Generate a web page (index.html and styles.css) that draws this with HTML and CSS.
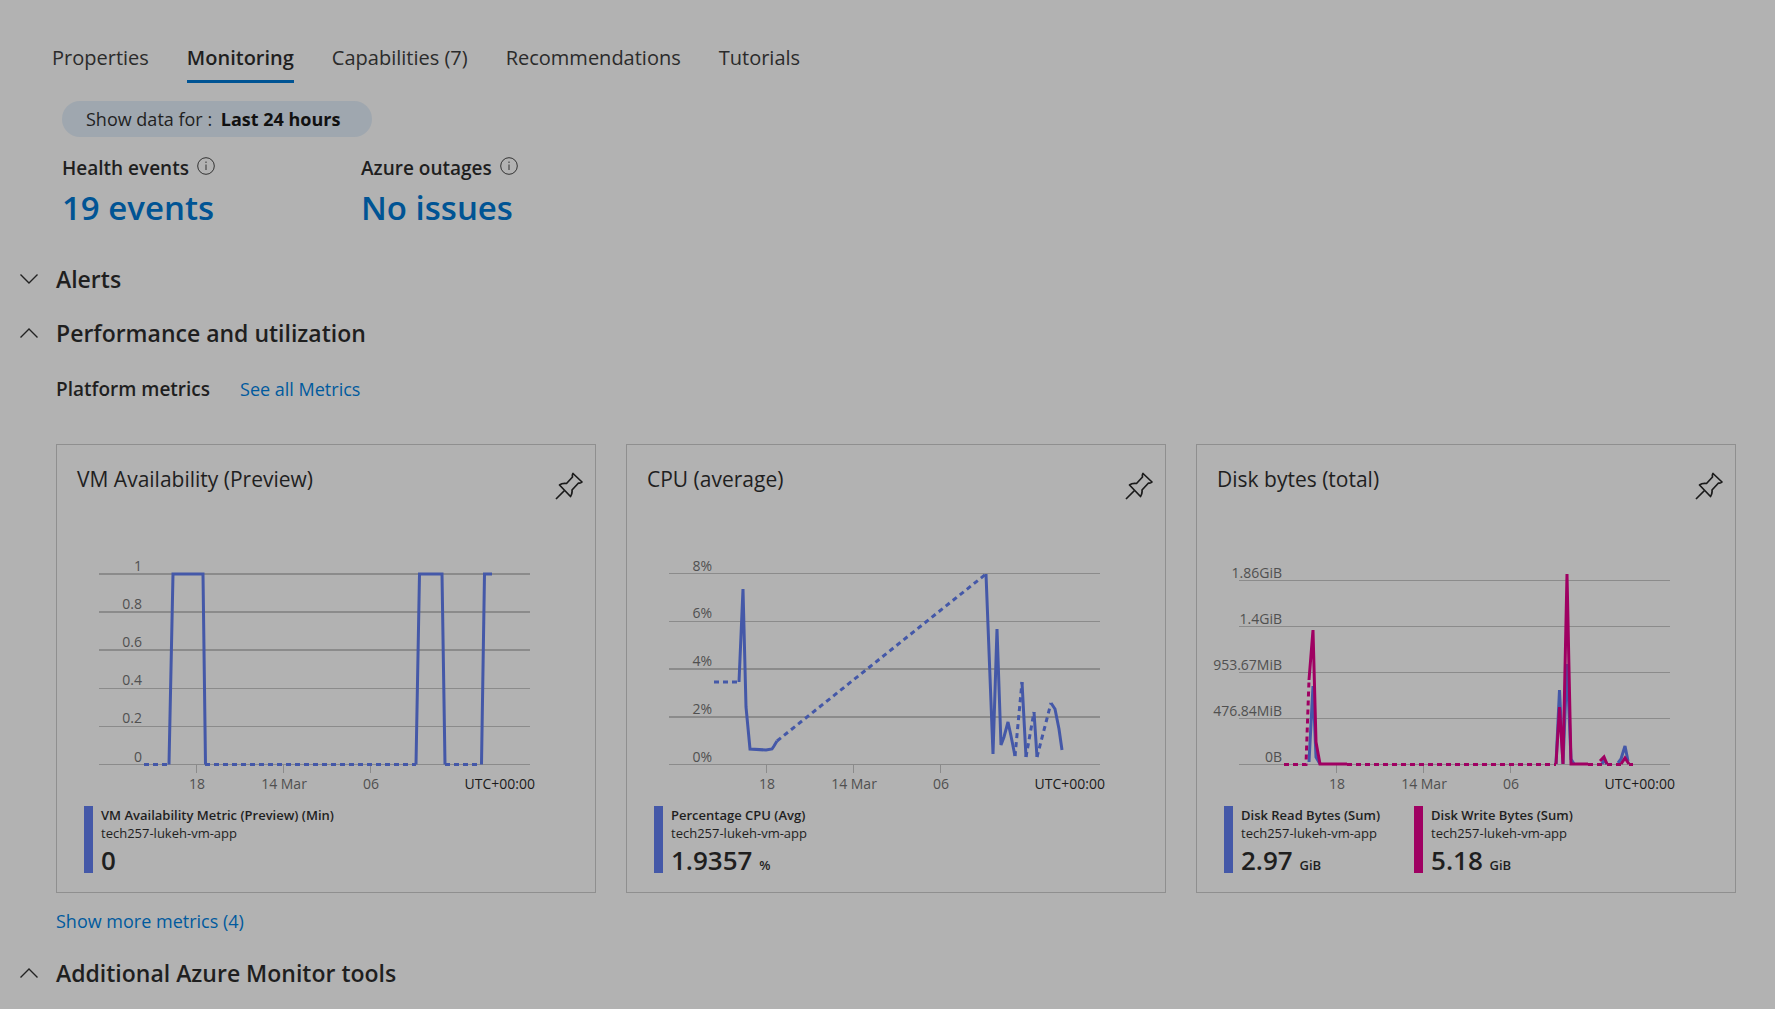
FILE: index.html
```html
<!DOCTYPE html>
<html lang="en">
<head>
<meta charset="utf-8">
<meta name="viewport" content="width=device-width, initial-scale=1">
<title>Monitoring</title>
<link rel="stylesheet" href="styles.css">
</head>
<body>
<svg class="sprite" aria-hidden="true">
  <symbol id="pin" viewBox="0 0 28 28"><path d="M1 27 10 18M18 1.500 27 10 Q25.500 11.500 23.500 11 L17 18 Q17.500 21.500 15.500 24.500 L4.500 13 Q7 11 11.500 11.500 L17.500 5 Q17 3 18 1.500Z"/></symbol>
  <symbol id="info" viewBox="0 0 18 18"><circle cx="9" cy="9" r="8.300"/><path d="M9 7.500V13M9 4.500V6"/></symbol>
  <symbol id="down" viewBox="0 0 18 10"><path d="M.5 .5 9 9 17.500 .5"/></symbol>
  <symbol id="up" viewBox="0 0 18 10"><path d="M.5 9.500 9 1 17.500 9.500"/></symbol>
</svg>

<nav class="tabs" role="tablist">
  <button class="tab" role="tab">Properties</button>
  <button class="tab tab-active" role="tab" aria-selected="true">Monitoring</button>
  <button class="tab" role="tab">Capabilities (7)</button>
  <button class="tab" role="tab">Recommendations</button>
  <button class="tab" role="tab">Tutorials</button>
</nav>

<main>
  <div class="overview">
    <button class="pill">Show data for : <strong>Last 24 hours</strong></button>
    <div class="stats">
      <div class="stat">
        <div class="stat-label">Health events <svg class="info"><use href="#info"/></svg></div>
        <a class="stat-value" href="#">19 events</a>
      </div>
      <div class="stat">
        <div class="stat-label">Azure outages <svg class="info"><use href="#info"/></svg></div>
        <a class="stat-value" href="#">No issues</a>
      </div>
    </div>
  </div>

  <button class="section" aria-expanded="false"><svg class="chevron"><use href="#down"/></svg>Alerts</button>
  <button class="section" aria-expanded="true"><svg class="chevron"><use href="#up"/></svg>Performance and utilization</button>

  <div class="panel">
    <div class="platform"><h3>Platform metrics</h3><a class="link" href="#">See all Metrics</a></div>

    <div class="cards">
      <article class="card">
        <header class="card-head"><h4>VM Availability (Preview)</h4><button class="pin" aria-label="Pin to dashboard"><svg><use href="#pin"/></svg></button></header>
        <svg class="chart" viewBox="1 80 538 272">
          <path class="grid grid-strong" d="M43 131H474M43 169H474M43 207H474"/>
          <path class="grid" d="M43 245.500H474M43 283.500H474M43 321.500H474M140.500 322V330M227.500 322V330M314.500 322V330"/>
          <g class="y-labels"><text x="86" y="128">1</text><text x="86" y="166">0.8</text><text x="86" y="204">0.6</text><text x="86" y="242">0.4</text><text x="86" y="280">0.2</text><text x="86" y="319">0</text></g>
          <g class="x-labels"><text x="141" y="346">18</text><text x="228" y="346">14 Mar</text><text x="315" y="346">06</text><text class="zone" x="479" y="346">UTC+00:00</text></g>
          <path class="line blue dashed" d="M88 321.500H113M149 321.500H360M389 321.500H425"/>
          <path class="line blue" d="M113 321.500 117 131H147L149.500 321.500M360 321.500 363.500 131H386L389 321.500M425.500 321.500 428.500 131H436"/>
        </svg>
        <div class="legend">
          <div class="metric metric-blue"><div class="metric-name">VM Availability Metric (Preview) (Min)</div><div class="metric-host">tech257-lukeh-vm-app</div><div class="metric-value">0</div></div>
        </div>
      </article>

      <article class="card">
        <header class="card-head"><h4>CPU (average)</h4><button class="pin" aria-label="Pin to dashboard"><svg><use href="#pin"/></svg></button></header>
        <svg class="chart" viewBox="1 80 538 272">
          <path class="grid grid-strong" d="M43 226H474M43 274H474"/>
          <path class="grid" d="M43 130.500H474M43 178.500H474M43 321.500H474M140.500 322V330M227.500 322V330M314.500 322V330"/>
          <g class="y-labels"><text x="86" y="128">8%</text><text x="86" y="175">6%</text><text x="86" y="223">4%</text><text x="86" y="271">2%</text><text x="86" y="319">0%</text></g>
          <g class="x-labels"><text x="141" y="346">18</text><text x="228" y="346">14 Mar</text><text x="315" y="346">06</text><text class="zone" x="479" y="346">UTC+00:00</text></g>
          <path class="line blue dashed" d="M88 239H113M151 298 360 131M389 313 396 239M400 314 408 269M411 314 425 260"/>
          <path class="line blue" d="M113 239 117 146 120 264 124 306 140 307 146 306 148 303 151 298M360 131 367 311 371 186 375 302 378 294 382 279 385 293 389 313M396 239 400 314M408 269 411 314M425 260 429 266 433 286 436 307"/>
        </svg>
        <div class="legend">
          <div class="metric metric-blue"><div class="metric-name">Percentage CPU (Avg)</div><div class="metric-host">tech257-lukeh-vm-app</div><div class="metric-value">1.9357 <small>%</small></div></div>
        </div>
      </article>

      <article class="card">
        <header class="card-head"><h4>Disk bytes (total)</h4><button class="pin" aria-label="Pin to dashboard"><svg><use href="#pin"/></svg></button></header>
        <svg class="chart" viewBox="1 80 538 272">
          <path class="grid" d="M43 137.500H474M43 183.500H474M43 229.500H474M43 275.500H474M43 321.500H474M140.500 322V330M227.500 322V330M314.500 322V330"/>
          <g class="y-labels"><text x="86" y="135">1.86GiB</text><text x="86" y="181">1.4GiB</text><text x="86" y="227">953.67MiB</text><text x="86" y="273">476.84MiB</text><text x="86" y="319">0B</text></g>
          <g class="x-labels"><text x="141" y="346">18</text><text x="228" y="346">14 Mar</text><text x="315" y="346">06</text><text class="zone" x="479" y="346">UTC+00:00</text></g>
          <path class="line blue" d="M113 319 117 243 120 314 124 321M360 321 363.500 247 367 321 371 221 375 316 378 321M406 321 408 317 411 321M422 320 425 316 429 303 432 318"/>
          <path class="line magenta dashed" d="M88 321.500H110L113 237M151 321.500H360M392 321.500H406M411 321.500H425M433 321.500H437"/>
          <path class="line magenta" d="M113 237 117 187 120 299 124 321 151 321M360 321 363.500 264 367 321 371 131 375 321 392 321M404 318 408 314 411 321M425 321 429 315 433 321"/>
        </svg>
        <div class="legend">
          <div class="metric metric-blue"><div class="metric-name">Disk Read Bytes (Sum)</div><div class="metric-host">tech257-lukeh-vm-app</div><div class="metric-value">2.97 <small>GiB</small></div></div>
          <div class="metric metric-magenta"><div class="metric-name">Disk Write Bytes (Sum)</div><div class="metric-host">tech257-lukeh-vm-app</div><div class="metric-value">5.18 <small>GiB</small></div></div>
        </div>
      </article>
    </div>

    <a class="link more" href="#">Show more metrics (4)</a>
  </div>

  <button class="section" aria-expanded="true"><svg class="chevron"><use href="#up"/></svg>Additional Azure Monitor tools</button>
</main>
</body>
</html>
```
FILE: styles.css
```css
* { box-sizing: border-box; }

body {
  margin: 0;
  background: #b2b2b2;
  color: #1f1f1f;
  font: 18px/28px "Open Sans", "Noto Sans", sans-serif;
}

button {
  border: 0;
  padding: 0;
  background: none;
  color: inherit;
  font: inherit;
}

a { color: #005494; text-decoration: none; }
h3, h4 { margin: 0; }
h3 { font-size: 19px; font-weight: 600; }
h4 { font-size: 21px; font-weight: 400; }
.sprite { display: none; }
svg { fill: none; }

.tabs {
  display: flex;
  gap: 38px;
  padding: 44px 52px 0;
}
.tab {
  padding-bottom: 8px;
  border-bottom: 3px solid transparent;
  color: #2b2b2b;
  font-size: 20px;
}
.tab-active {
  border-color: #005494;
  color: #1f1f1f;
  font-weight: 600;
}

.overview { padding: 18px 62px 0; }
.pill {
  display: block;
  height: 36px;
  padding: 0 32px 0 24px;
  border-radius: 18px;
  background: #9fa7af;
}
.pill strong { margin-left: 4px; color: #111; font-weight: 700; }

.stats { display: flex; margin-top: 19px; }
.stat { width: 299px; }
.stat-label {
  display: flex;
  gap: 8px;
  font-size: 19px;
  line-height: 24px;
  font-weight: 600;
}
.info { width: 18px; height: 18px; margin-top: 1px; stroke: #333; }
.stat-value {
  display: block;
  margin-top: 4px;
  font-size: 33px;
  line-height: 48px;
  font-weight: 600;
}

.section {
  display: flex;
  align-items: center;
  gap: 18px;
  margin: 22px 0 0 20px;
  font-size: 23px;
  line-height: 32px;
  font-weight: 600;
}
.overview + .section { margin-top: 31px; }
.chevron { width: 18px; height: 10px; stroke: #222; stroke-width: 1.400; }

.panel { padding: 26px 39px 0 56px; }
.platform { display: flex; gap: 30px; }
.link { color: #005a9e; }
.more { display: block; width: fit-content; margin-top: 14px; }

.cards {
  display: grid;
  grid-template-columns: repeat(3, 1fr);
  gap: 30px;
  margin-top: 41px;
}
.card { border: 1px solid #8f8f8f; padding: 20px 0 19px; }
.card-head {
  display: flex;
  justify-content: space-between;
  padding: 0 12px 0 20px;
}
.pin { padding-top: 7px; }
.pin svg { display: block; width: 28px; height: 28px; stroke: #1b1b1b; stroke-width: 1.700; stroke-linejoin: round; }

.chart {
  display: block;
  width: 100%;
  margin-top: 23px;
}
.grid { stroke: #8b8b8b; }
.grid-strong { stroke-width: 2; }
.y-labels, .x-labels { fill: #505050; font-size: 14px; }
.y-labels { text-anchor: end; }
.x-labels { text-anchor: middle; }
.zone { fill: #1b1b1b; text-anchor: end; }
.line { stroke-width: 3; }
.dashed { stroke-dasharray: 5 4; }
.blue { stroke: #4458a8; }
.magenta { stroke: #9f0062; }

.legend { display: flex; margin: 11px 0 0 27px; gap: 34px; }
.metric {
  border-left: 9px solid;
  padding-left: 8px;
  font-size: 13px;
  line-height: 18px;
}
.metric-blue { border-color: #4458a8; }
.metric-magenta { border-color: #9f0062; }
.metric-name { font-weight: 600; }
.metric-value { margin-top: 6px; font-size: 26px; line-height: 25px; font-weight: 600; }
.metric-value small { font-size: 13px; line-height: 1; }
```
